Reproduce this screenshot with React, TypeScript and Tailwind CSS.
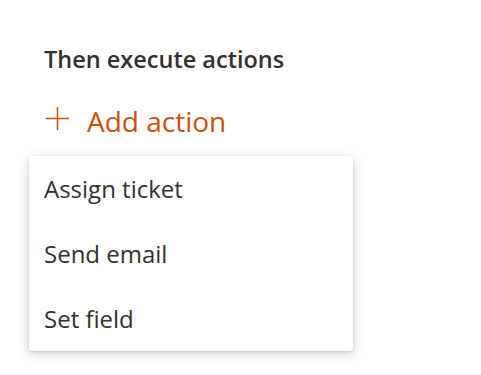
import React from 'react';

const items = ['Assign ticket', 'Send email', 'Set field'];

export default function App() {
    return (
        <div className="min-h-[375px] w-[481px] bg-white text-[#323130]" style={{ fontFamily: '"Open Sans", "Noto Sans", sans-serif' }}>
            <div className="pl-[44px] pt-[43px]">
                <h2 className="text-[23.5px] leading-[32px] font-semibold">Then execute actions</h2>
                <button className="mt-[28px] ml-[2px] flex items-start gap-[18px] text-[#ca5010]">
                    <svg width="23" height="23" viewBox="0 0 23 23" className="mt-[4px] shrink-0">
                        <path d="M11.5 0v23M0 11.5h23" stroke="currentColor" strokeWidth="1.5" fill="none" />
                    </svg>
                    <span className="text-[28px] leading-[36px]">Add action</span>
                </button>
            </div>
            <div className="ml-[29px] mt-[17px] w-[324px] rounded-[3px] bg-white shadow-[0_3px_12px_rgba(0,0,0,0.18),0_1px_3px_rgba(0,0,0,0.12)]">
                {items.map(label => (
                    <div key={label} className="h-[65px] flex items-center px-[15px] text-[24px]">
                        {label}
                    </div>
                ))}
            </div>
        </div>
    );
}
